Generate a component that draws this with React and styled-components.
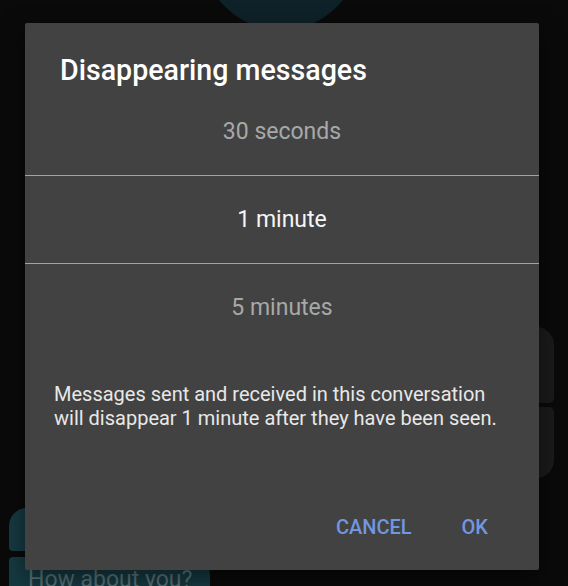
import React, { useState } from 'react';
import styled, { createGlobalStyle } from 'styled-components';

const GlobalStyle = createGlobalStyle`
  html, body {
    margin: 0;
    padding: 0;
    background: #0a0a0a;
  }
  body {
    font-family: Roboto, 'Noto Sans', 'Liberation Sans', sans-serif;
    -webkit-font-smoothing: antialiased;
  }
`;

const Screen = styled.div`
  position: relative;
  width: 568px;
  height: 586px;
  overflow: hidden;
  background: #0a0a0a;
  display: flex;
  flex-direction: column;
`;

const Avatar = styled.div`
  flex: none;
  width: 158px;
  height: 158px;
  border-radius: 50%;
  background: #0f2229;
  margin: -128px 0 0 202px;
`;

const Thread = styled.div`
  display: flex;
  flex-direction: column;
  margin-top: 297px;
`;

const Bubble = styled.div`
  flex: none;
  box-sizing: border-box;
  width: ${(p) => p.$width}px;
  height: ${(p) => p.$height}px;
  margin-top: ${(p) => p.$gap || 0}px;
  border-radius: ${(p) => p.$radius};
  background: ${(p) => (p.$mine ? '#163a42' : '#1b1b1b')};
  align-self: ${(p) => (p.$mine ? 'flex-start' : 'flex-end')};
  margin-left: ${(p) => (p.$mine ? '9px' : '0')};
  margin-right: ${(p) => (p.$mine ? '0' : '14px')};
  padding: 9px 19px;
  color: #5a7378;
  font-size: 23px;
  line-height: 28px;
  white-space: nowrap;
`;

const Dialog = styled.div`
  position: absolute;
  left: 25px;
  top: 23px;
  width: 514px;
  height: 547px;
  box-sizing: border-box;
  background: #424242;
  border-radius: 2px;
  box-shadow: 0 8px 24px rgba(0, 0, 0, 0.5);
  display: flex;
  flex-direction: column;
`;

const Title = styled.h2`
  margin: 0;
  padding: 30px 35px 0;
  font-size: 28.6px;
  line-height: 34px;
  font-weight: 500;
  color: #ffffff;
`;

const Picker = styled.div`
  display: flex;
  flex-direction: column;
`;

const Option = styled.div`
  box-sizing: border-box;
  height: 88px;
  display: flex;
  align-items: center;
  justify-content: center;
  font-size: 23px;
  color: ${(p) => (p.$selected ? '#f5f5f5' : '#a8a8a8')};
  border-top: ${(p) => (p.$divided ? '1px solid #a3a0b3' : 'none')};
  cursor: pointer;
`;

const Body = styled.p`
  margin: 31px 0 0;
  padding: 0 30px 0 29px;
  font-size: 20px;
  line-height: 24px;
  color: #e8e8e8;
`;

const Actions = styled.div`
  margin-top: auto;
  display: flex;
  justify-content: flex-end;
  gap: 18px;
  padding: 0 35px 25px 0;
`;

const Button = styled.button`
  height: 36px;
  padding: 0 16px;
  border: none;
  background: none;
  font-family: inherit;
  font-size: 20px;
  font-weight: 500;
  color: #7097e0;
  text-transform: uppercase;
  cursor: pointer;
`;

const options = ['30 seconds', '1 minute', '5 minutes'];

export default function App() {
  const [selected, setSelected] = useState(1);
  const body = `Messages sent and received in this conversation will disappear ${options[selected]} after they have been seen.`;

  return (
    <>
      <GlobalStyle />
      <Screen>
        <Avatar />
        <Thread>
          <Bubble $width={320} $height={76} $radius="18px 18px 5px 18px" />
          <Bubble $width={320} $height={71} $gap={4} $radius="18px 5px 18px 18px" />
          <Bubble $mine $width={180} $height={43} $gap={30} $radius="18px 18px 18px 4px" />
          <Bubble $mine $width={201} $height={60} $gap={6} $radius="4px 18px 18px 18px">
            How about you?
          </Bubble>
        </Thread>

        <Dialog>
          <Title>Disappearing messages</Title>
          <Picker>
            {options.map((label, i) => (
              <Option
                key={label}
                $selected={i === selected}
                $divided={i > 0}
                onClick={() => setSelected(i)}
              >
                {label}
              </Option>
            ))}
          </Picker>
          <Body>{body}</Body>
          <Actions>
            <Button>Cancel</Button>
            <Button>OK</Button>
          </Actions>
        </Dialog>
      </Screen>
    </>
  );
}
